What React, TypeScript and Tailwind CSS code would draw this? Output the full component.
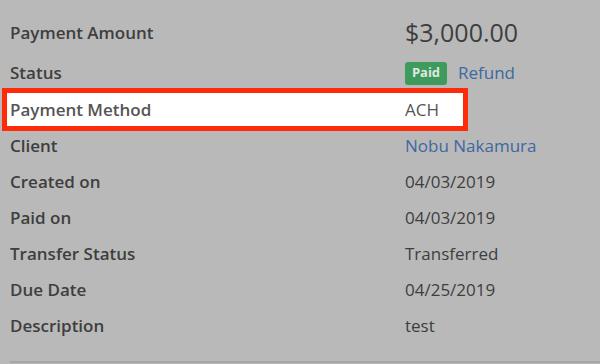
import React from "react";

const font = { fontFamily: '"Open Sans", "Liberation Sans", sans-serif' };

function Row({ label, children, className = "" }: { label: string; children: React.ReactNode; className?: string }) {
  return (
    <div className={`flex items-center h-[36px] ${className}`}>
      <div className="w-[405px] pl-[10px] font-semibold text-[17px] text-[#3e3e3e]">{label}</div>
      <div className="flex items-center text-[17px] text-[#3e3e3e]">{children}</div>
    </div>
  );
}

export default function App() {
  return (
    <div className="w-[600px] h-[364px] bg-[#b9b9b9] overflow-hidden" style={font}>
      <div className="pt-[14px]">
        <div className="flex items-center h-[41px] pb-[4px]">
          <div className="w-[405px] pl-[10px] font-semibold text-[17px] text-[#3e3e3e]">Payment Amount</div>
          <div className="text-[25px] text-[#3e3e3e] leading-none">$3,000.00</div>
        </div>
        <Row label="Status">
          <span className="inline-flex items-center justify-center h-[23px] w-[42px] rounded-[3px] bg-[#3f9a5d] text-[#dfe8e1] text-[13px] font-bold">
            Paid
          </span>
          <span className="ml-[11px] text-[#3e68a0]">Refund</span>
        </Row>
        <div className="-mt-[3px] ml-[2px] w-[466px] h-[43px] border-[5px] border-[#ff2a0a] bg-white flex items-center pt-[1px]">
          <div className="w-[398px] pl-[3px] font-semibold text-[17px] text-[#555555]">Payment Method</div>
          <div className="text-[17px] text-[#555555]">ACH</div>
        </div>
        <Row label="Client" className="-mt-[3px]">
          <span className="text-[#3e68a0]">Nobu Nakamura</span>
        </Row>
        <Row label="Created on">04/03/2019</Row>
        <Row label="Paid on">04/03/2019</Row>
        <Row label="Transfer Status">Transferred</Row>
        <Row label="Due Date">04/25/2019</Row>
        <Row label="Description">test</Row>
        <div className="mt-[17px] ml-[10px] border-b-[2px] border-[#a6a6a6]" />
      </div>
    </div>
  );
}
